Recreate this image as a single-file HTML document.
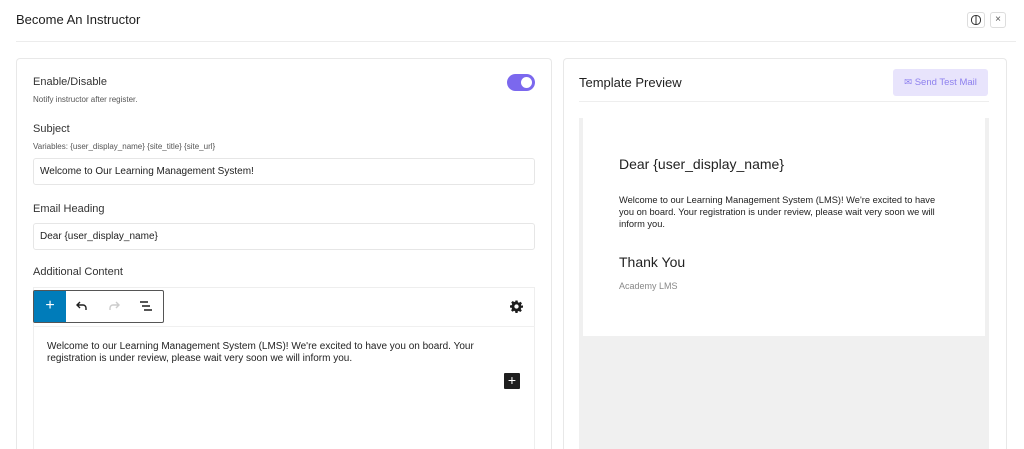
<!DOCTYPE html>
<html><head><style>
*{box-sizing:border-box;margin:0;padding:0}
html,body{width:1024px;height:449px;overflow:hidden}
body{background:#fff;font-family:"Liberation Sans",sans-serif;color:#1e1e1e;position:relative}
.a{position:absolute}
.card{border:1px solid #e8e8e8;border-bottom:none;border-radius:4px 4px 0 0;background:#fff}
.lbl{font-size:11px;color:#333}
.small{font-size:8px;color:#555}
.inp{border:1px solid #e6e6e6;border-radius:3px;height:27px;font-size:10px;color:#222;padding:7px 6px}
</style></head><body>
<div class="a" style="left:16px;top:12px;font-size:13px;color:#1e1e1e">Become An Instructor</div>
<div class="a" style="left:967px;top:12px;width:18px;height:16px;border:1px solid #ddd;border-radius:3px"><svg width="16" height="14" viewBox="0 0 16 14"><rect x="3.5" y="2.5" width="9" height="9" rx="4" fill="none" stroke="#333" stroke-width="1"/><line x1="8" y1="2.5" x2="8" y2="11.5" stroke="#333"/></svg></div>
<div class="a" style="left:990px;top:12px;width:16px;height:16px;border:1px solid #ddd;border-radius:3px;font-size:10px;text-align:center;line-height:14px;color:#555">×</div>
<div class="a" style="left:16px;top:41px;width:1000px;height:1px;background:#ececec"></div>

<div class="a card" style="left:16px;top:58px;width:536px;height:391px"></div>
<div class="a lbl" style="left:33px;top:76px">Enable/Disable</div>
<div class="a small" style="left:33px;top:95px">Notify instructor after register.</div>
<div class="a" style="left:507px;top:74px;width:28px;height:17px;border-radius:9px;background:#7b68ee"><div class="a" style="right:3px;top:3px;width:11px;height:11px;border-radius:50%;background:#fff"></div></div>
<div class="a lbl" style="left:33px;top:123px">Subject</div>
<div class="a small" style="left:33px;top:142px">Variables: {user_display_name} {site_title} {site_url}</div>
<div class="a inp" style="left:33px;top:158px;width:502px">Welcome to Our Learning Management System!</div>
<div class="a lbl" style="left:33px;top:203px">Email Heading</div>
<div class="a inp" style="left:33px;top:223px;width:502px">Dear {user_display_name}</div>
<div class="a lbl" style="left:33px;top:266px">Additional Content</div>
<div class="a" style="left:33px;top:287px;width:502px;height:162px;border:1px solid #eee;border-bottom:none"></div>
<div class="a" style="left:33px;top:326px;width:502px;height:1px;background:#f0f0f0"></div>
<div class="a" style="left:33px;top:290px;width:131px;height:33px;border:1px solid #555;border-radius:2px"></div>
<div class="a" style="left:34px;top:291px;width:32px;height:31px;background:#007cba;color:#fff;font-size:16px;text-align:center;line-height:30px">+</div>
<svg class="a" style="left:74px;top:298px" width="16" height="16" viewBox="0 0 16 16"><path d="M6 4L3 7l3 3M3 7h6a3 3 0 0 1 3 3v2" fill="none" stroke="#1e1e1e" stroke-width="1.4"/></svg>
<svg class="a" style="left:106px;top:298px" width="16" height="16" viewBox="0 0 16 16"><path d="M10 4l3 3-3 3M13 7H7a3 3 0 0 0-3 3v2" fill="none" stroke="#ccc" stroke-width="1.4"/></svg>
<svg class="a" style="left:138px;top:298px" width="16" height="16" viewBox="0 0 16 16"><path d="M2 4h8M4 8h8M6 12h8" stroke="#1e1e1e" stroke-width="1.4"/></svg>
<svg class="a" style="left:510px;top:300px" width="13" height="13" viewBox="0 0 24 24"><path fill="#1e1e1e" d="M10 1h4l.6 3.2 2 .9 2.7-1.9 2.8 2.8-1.9 2.7.9 2L24 10v4l-3.2.6-.9 2 1.9 2.7-2.8 2.8-2.7-1.9-2 .9L14 24h-4l-.6-3.2-2-.9-2.7 1.9-2.8-2.8 1.9-2.7-.9-2L0 14v-4l3.2-.6.9-2L2.2 4.7 5 1.9l2.7 1.9 2-.9zM12 8a4 4 0 1 0 0 8 4 4 0 0 0 0-8z"/></svg>
<div class="a" style="left:47px;top:341px;width:450px;font-size:10px;line-height:12px;color:#222">Welcome to our Learning Management System (LMS)! We're excited to have you on board. Your registration is under review, please wait very soon we will inform you.</div>
<div class="a" style="left:504px;top:373px;width:16px;height:16px;background:#1e1e1e;color:#fff;font-size:14px;text-align:center;line-height:15px;border-radius:1px">+</div>

<div class="a card" style="left:563px;top:58px;width:444px;height:391px"></div>
<div class="a" style="left:579px;top:75px;font-size:13px;color:#222">Template Preview</div>
<div class="a" style="left:893px;top:69px;width:95px;height:27px;background:#e8e4fc;border-radius:3px;font-size:9.5px;color:#8e80ee;line-height:27px;text-align:center">✉ Send Test Mail</div>
<div class="a" style="left:579px;top:101px;width:410px;height:1px;background:#eee"></div>
<div class="a" style="left:579px;top:118px;width:410px;height:331px;background:#f0f0f0"></div>
<div class="a" style="left:583px;top:118px;width:402px;height:218px;background:#fff"></div>
<div class="a" style="left:619px;top:156px;font-size:14px;color:#222">Dear {user_display_name}</div>
<div class="a" style="left:619px;top:194px;width:328px;font-size:9.3px;line-height:12px;color:#222">Welcome to our Learning Management System (LMS)! We're excited to have you on board. Your registration is under review, please wait very soon we will inform you.</div>
<div class="a" style="left:619px;top:254px;font-size:14px;color:#222">Thank You</div>
<div class="a" style="left:619px;top:281px;font-size:9px;color:#888">Academy LMS</div>
</body></html>
